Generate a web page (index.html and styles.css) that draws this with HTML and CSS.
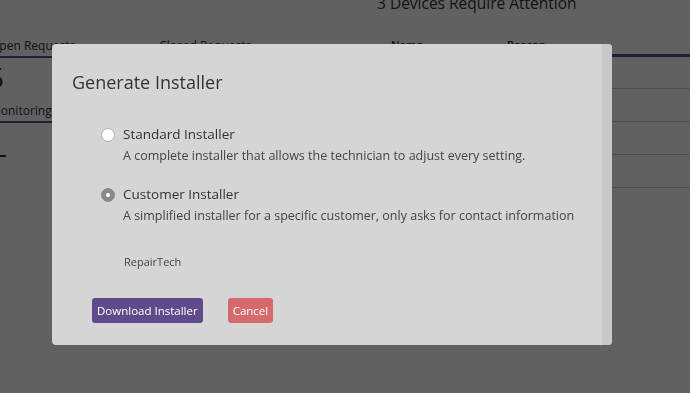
FILE: index.html
```html
<!DOCTYPE html>
<html lang="en">
<head>
  <meta charset="UTF-8">
  <title>Generate Installer</title>
  <link rel="stylesheet" href="styles.css">
</head>
<body>

  <div class="page">
    <div class="left-col">
      <div class="tabs">
        <div class="tab active">Open Requests</div>
        <div class="tab">Closed Requests</div>
      </div>
      <div class="big-num">5</div>
      <div class="tabs">
        <div class="tab active">Monitoring Devices</div>
      </div>
      <div class="big-num dash">-</div>
    </div>

    <div class="right-col">
      <h3 class="devices-title">3 Devices Require Attention</h3>
      <table class="devices">
        <thead>
          <tr><th>Name</th><th>Reason</th></tr>
        </thead>
        <tbody>
          <tr><td>WS-01</td><td>Documentation</td></tr>
          <tr><td>WS-02</td><td>Documentation</td></tr>
          <tr><td></td><td></td></tr>
          <tr><td></td><td></td></tr>
        </tbody>
      </table>
    </div>
  </div>

  <div class="overlay"></div>

  <div class="modal">
    <div class="modal-body">
      <h2>Generate Installer</h2>

      <label class="option">
        <span class="radio"></span>
        <span class="option-text">
          <span class="option-title">Standard Installer</span>
          <span class="option-desc">A complete installer that allows the technician to adjust every setting.</span>
        </span>
      </label>

      <label class="option">
        <span class="radio checked"></span>
        <span class="option-text">
          <span class="option-title">Customer Installer</span>
          <span class="option-desc">A simplified installer for a specific customer, only asks for contact information</span>
        </span>
      </label>

      <div class="customer">RepairTech</div>

      <div class="actions">
        <button class="btn primary">Download Installer</button>
        <button class="btn danger">Cancel</button>
      </div>
    </div>
    <div class="scrollbar"></div>
  </div>

</body>
</html>
```

FILE: styles.css
```css
* {
  box-sizing: border-box;
}

body {
  font-family: "Open Sans", sans-serif;
  background-color: #ffffff;
  color: #333;
  margin: 0;
  width: 690px;
  height: 393px;
  overflow: hidden;
}

.page {
  display: flex;
  height: 393px;
}

.left-col {
  width: 383px;
  padding-top: 37px;
  margin-left: -10px;
}

.tabs {
  display: flex;
  gap: 80px;
}

.tab {
  font-size: 12px;
  padding-bottom: 2px;
  color: #333;
  border-bottom: 2px solid transparent;
}

.tab.active {
  border-bottom-color: #5f4b8b;
  padding-right: 4px;
}

.big-num {
  font-size: 28px;
  line-height: 38px;
  margin: 0 0 6px -2px;
}

.big-num.dash {
  margin: 10px 0 0 8px;
}

.right-col {
  flex: 1;
  padding-left: 4px;
}

.devices-title {
  font-size: 15.5px;
  font-weight: 500;
  margin: -8px 0 0 0;
  line-height: 22px;
}

.devices {
  width: 100%;
  border-collapse: collapse;
  margin-top: 20px;
}

.devices th {
  text-align: left;
  font-size: 11px;
  font-weight: 600;
  padding: 3px 14px 2px;
  border-bottom: 3px solid #5f4b8b;
}

.devices th:first-child {
  width: 116px;
}

.devices td {
  font-size: 12px;
  height: 33px;
  padding: 2px 14px 0;
  border-bottom: 1px solid #ccc;
}

.overlay {
  position: fixed;
  inset: 0;
  background-color: rgba(0, 0, 0, 0.62);
}

.modal {
  position: fixed;
  left: 52px;
  top: 44px;
  width: 560px;
  height: 301px;
  background-color: #d5d5d5;
  border-radius: 4px;
  display: flex;
  overflow: hidden;
}

.modal-body {
  flex: 1;
  padding: 26px 20px 20px 20px;
}

.scrollbar {
  width: 10px;
  background-color: #c8c8c8;
}

h2 {
  font-size: 18px;
  font-weight: 400;
  color: #333;
  margin: 0 0 30px 0;
  line-height: 24px;
}

.option {
  display: flex;
  gap: 8px;
  margin-left: 29px;
  margin-bottom: 18px;
}

.radio {
  width: 14px;
  height: 14px;
  border-radius: 50%;
  background-color: #ffffff;
  border: 1px solid #b0b0b0;
  margin-top: 4px;
  flex-shrink: 0;
  display: flex;
  align-items: center;
  justify-content: center;
}

.radio.checked {
  background-color: #8a8a8a;
  border-color: #8a8a8a;
}

.radio.checked::after {
  content: "";
  width: 4px;
  height: 4px;
  border-radius: 50%;
  background-color: #ffffff;
}

.option-text {
  display: flex;
  flex-direction: column;
}

.option-title {
  font-size: 13.5px;
  font-weight: 500;
  color: #333;
  line-height: 21px;
}

.option-desc {
  font-size: 12.5px;
  color: #444;
  line-height: 21px;
}

.customer {
  font-size: 11px;
  font-weight: 500;
  color: #444;
  margin: 28px 0 0 52px;
}

.actions {
  display: flex;
  gap: 25px;
  margin: 29px 0 0 20px;
}

.btn {
  font-family: "Open Sans", sans-serif;
  font-size: 11.5px;
  color: #ffffff;
  border: none;
  border-radius: 3px;
  height: 25px;
  padding: 0 5px;
  cursor: pointer;
}

.btn.primary {
  background-color: #5f4b8b;
}

.btn.danger {
  background-color: #d6696c;
}
```
